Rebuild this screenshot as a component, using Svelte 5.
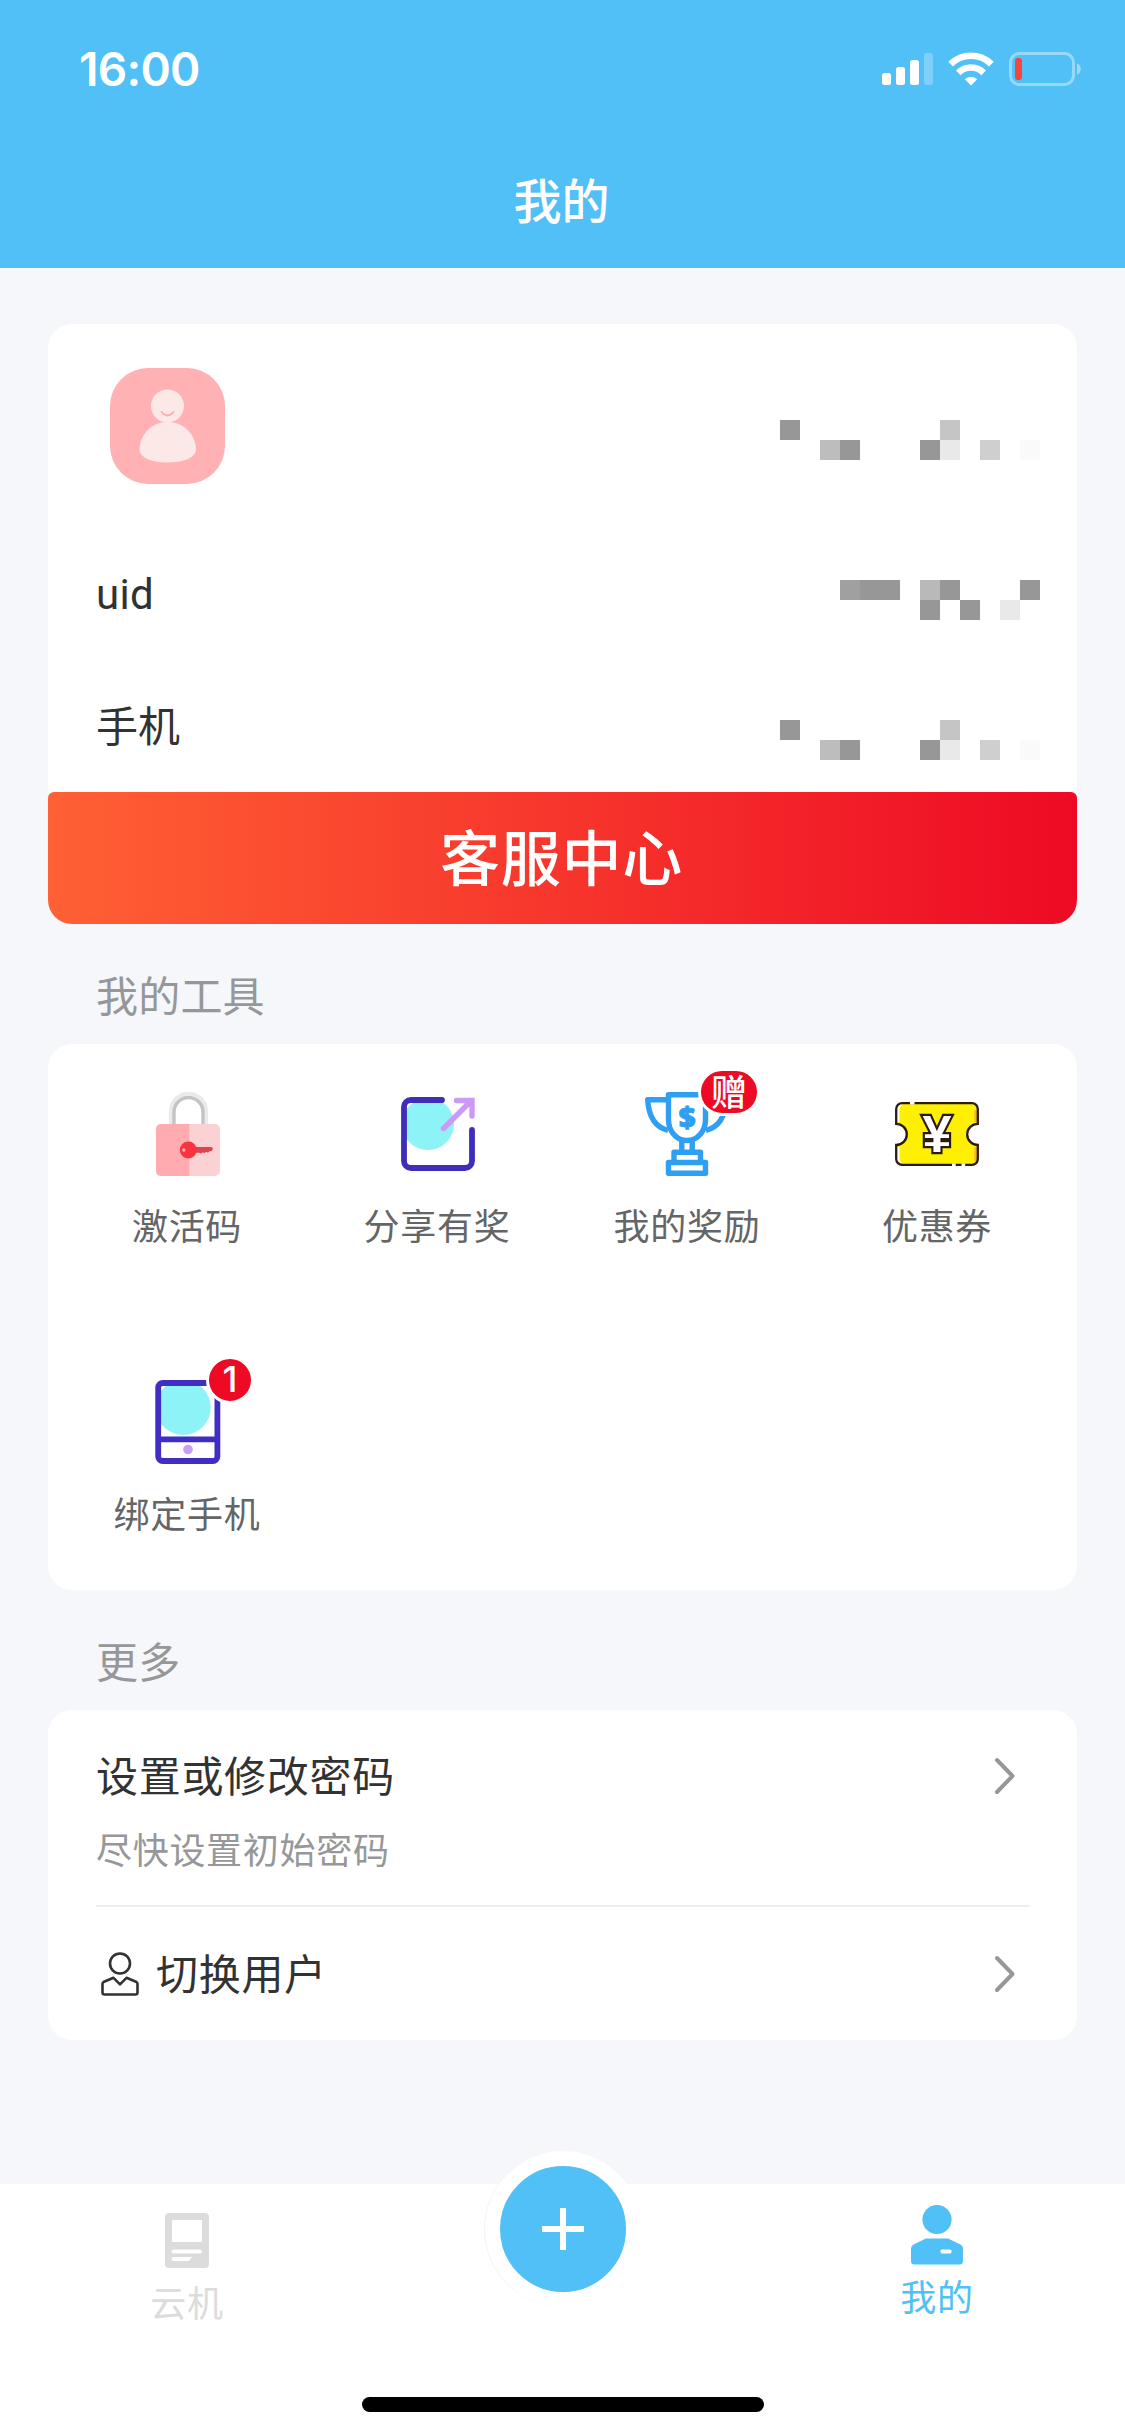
<script lang="ts">
  // each cell: [column, row, colour] on a 20px grid
  type Cell = [number, number, string];

  const nameMask: Cell[] = [
    [0, 0, '#979797'], [8, 0, '#c5c5c5'],
    [2, 1, '#bdbdbd'], [3, 1, '#979797'], [7, 1, '#979797'],
    [8, 1, '#e9e9e9'], [10, 1, '#cfcfcf'], [12, 1, '#fafafa']
  ];

  const uidMask: Cell[] = [
    [3, 0, '#a0a0a0'], [4, 0, '#979797'], [5, 0, '#979797'],
    [7, 0, '#b9b9b9'], [8, 0, '#979797'], [12, 0, '#979797'],
    [7, 1, '#979797'], [9, 1, '#979797'], [11, 1, '#e9e9e9']
  ];

  const tools = [
    { icon: 'lock', label: '激活码' },
    { icon: 'share', label: '分享有奖' },
    { icon: 'trophy', label: '我的奖励', badge: '赠' },
    { icon: 'coupon', label: '优惠券' },
    { icon: 'phone', label: '绑定手机', badge: '1' }
  ];
</script>

{#snippet mask(cells: Cell[], height: number, top: number)}
  <svg class="mask" width="260" {height} shape-rendering="crispEdges">
    {#each cells as [col, row, fill]}
      <rect x={col * 20} y={top + row * 20} width="20" height="20" {fill} />
    {/each}
  </svg>
{/snippet}

{#snippet arrow()}
  <svg class="arrow" width="24" height="40" viewBox="0 0 24 40">
    <path d="M4 4l15.5 16L4 36" fill="none" stroke="#969799" stroke-width="4" stroke-linecap="round" stroke-linejoin="round" />
  </svg>
{/snippet}

<div class="page">
  <header>
    <div class="status-bar">
      <span class="time">16:00</span>
      <svg width="202" height="36" viewBox="0 0 202 36">
        <g fill="#fff">
          <rect x="2" y="22" width="9" height="12" rx="2.5" />
          <rect x="16" y="16" width="9" height="18" rx="2.5" />
          <rect x="30" y="9" width="9" height="25" rx="2.5" />
          <rect x="44" y="2" width="9" height="32" rx="2.5" opacity=".25" />
          <path d="M91 34.500l-6.200-6.300a8.800 8.800 0 0 1 12.400 0z" />
        </g>
        <g fill="none" stroke="#fff" stroke-width="6.600">
          <path d="M78.300 21.800a18 18 0 0 1 25.400 0" />
          <path d="M70.600 13.200a29 29 0 0 1 40.800 0" />
        </g>
        <rect x="130.500" y="2.500" width="63" height="31" rx="9" fill="none" stroke="#fff" stroke-opacity=".4" stroke-width="3" />
        <rect x="135" y="7" width="7" height="22" rx="3" fill="#f8453c" />
        <path d="M197 12.500c5 1.500 5 9.500 0 11z" fill="#fff" opacity=".45" />
      </svg>
    </div>
    <h1>我的</h1>
  </header>

  <main>
    <section class="card profile">
      <div class="row user">
        <svg class="avatar" width="115" height="116" viewBox="0 0 115 116">
          <rect width="115" height="116" rx="38" fill="#ffb1b3" />
          <circle cx="57.500" cy="38" r="16.500" fill="#fde8e8" />
          <path d="M57.500 54c17 0 28 13 28.500 27 0 9-13 13.500-28.500 13.500S29.500 90 29.500 81C30 67 41 54 57.500 54z" fill="#fde8e8" />
          <path d="M51.500 44q6 7 12 0" fill="none" stroke="#ffa9ae" stroke-width="1.800" stroke-linecap="round" />
        </svg>
        {@render mask(nameMask, 204, 96)}
      </div>
      <div class="row">
        <span class="uid">uid</span>
        {@render mask(uidMask, 132, 52)}
      </div>
      <div class="row">
        <span class="mobile">手机</span>
        {@render mask(nameMask, 132, 60)}
      </div>
      <button class="service">客服中心</button>
    </section>

    <h2>我的工具</h2>
    <section class="card tools">
      {#each tools as tool}
        <div class="tool">
          <div class="icon">
            {#if tool.icon === 'lock'}
              <svg width="84" height="84" viewBox="0 0 84 84">
                <path d="M26 34V19a17.500 17.500 0 0 1 35 0v15" fill="none" stroke="#eaeaea" stroke-width="4" />
                <path d="M29 34V20a14.500 14.500 0 0 1 29 0v14" fill="none" stroke="#c3c5c5" stroke-width="3.400" />
                <rect x="11" y="32" width="64" height="52" rx="5" fill="#fbd1d3" />
                <path d="M44.300 32H16a5 5 0 0 0-5 5v42a5 5 0 0 0 5 5h28.300z" fill="#ffabb0" />
                <path d="M50 55h15.500q2.500 0 2.500 2l-1.500 2-2 .3-1.500 1.500-2-1-1.500 1.500-2-1-1.500 1.500-2-1H50z" fill="#de4450" />
                <circle cx="43.300" cy="58" r="8.500" fill="#f93440" />
                <circle cx="38.800" cy="58" r="1.700" fill="#ffb3b6" />
              </svg>
            {:else if tool.icon === 'share'}
              <svg width="84" height="84" viewBox="0 0 84 84">
                <circle cx="33" cy="32" r="26" fill="#8ef3f6" />
                <path d="M47 8H16a7 7 0 0 0-7 7v54a7 7 0 0 0 7 7h54a7 7 0 0 0 7-7V38" fill="none" stroke="#3f2dbb" stroke-width="5.800" stroke-linecap="round" />
                <path d="M48.500 36.500L76 9M61.500 8.500H77V24" fill="none" stroke="#cb9af6" stroke-width="5.400" stroke-linecap="round" />
              </svg>
            {:else if tool.icon === 'trophy'}
              <svg width="84" height="84" viewBox="0 0 84 84">
                <g fill="none" stroke="#2e9ff2" stroke-width="5.400" stroke-linejoin="round">
                  <path d="M23.500 2.700h37V28c0 10-7 20.500-18.500 20.500S23.500 38 23.500 28z" />
                  <path d="M23 7.700H2.700C3.500 23 9.500 35 23 38.500M61 7.700h20.300C80.500 23 74.500 35 61 38.500" />
                  <path d="M36.800 49v10.500M47.200 49v10.500" />
                  <path d="M29 70V60.200h26.500v9.800" />
                  <rect x="23.500" y="70.500" width="37" height="10.800" />
                </g>
                <text class="dollar" x="42" y="36" text-anchor="middle">$</text>
              </svg>
            {:else if tool.icon === 'coupon'}
              <svg width="84" height="84" viewBox="0 0 84 84">
                <path d="M7 11.200h70a5.800 5.800 0 0 1 5.800 5.800v14.800a10.600 10.600 0 0 0 0 21.200v14a5.800 5.800 0 0 1-5.800 5.800H7A5.800 5.800 0 0 1 1.200 67V53a10.600 10.600 0 0 0 0-21.200V17A5.800 5.800 0 0 1 7 11.200z" fill="#fff001" />
                <path d="M6 12.500Q3 14 3 17v13M3 55v12q0 3 3 4.500" fill="none" stroke="#fff" stroke-width="3" />
                <path d="M80.500 18v12M80.500 55v14" fill="none" stroke="#fbb03b" stroke-width="2.500" />
                <path d="M7 11.200h70a5.800 5.800 0 0 1 5.800 5.800v14.800a10.600 10.600 0 0 0 0 21.200v14a5.800 5.800 0 0 1-5.800 5.800H7A5.800 5.800 0 0 1 1.200 67V53a10.600 10.600 0 0 0 0-21.200V17A5.800 5.800 0 0 1 7 11.200z" fill="none" stroke="#2b1c12" stroke-width="2.300" />
                <path d="M15 11h4.500M57 73h3.700M66.500 73h3.700" stroke="#fff" stroke-width="3" />
                <text class="yuan" x="42" y="60" text-anchor="middle">¥</text>
              </svg>
            {:else}
              <svg width="84" height="84" viewBox="0 0 84 84">
                <circle cx="38.200" cy="27.500" r="27.500" fill="#8ef3f6" />
                <rect x="13.200" y="3" width="59.200" height="78" rx="4.500" fill="none" stroke="#3f2dc4" stroke-width="5.800" />
                <path d="M13 59.300h59" stroke="#3f2dc4" stroke-width="5.800" />
                <circle cx="43" cy="69.500" r="4.800" fill="#cb9ef2" />
              </svg>
            {/if}
            {#if tool.badge}
              <span class="badge" class:gift={tool.icon === 'trophy'}>{tool.badge}</span>
            {/if}
          </div>
          <span class="label">{tool.label}</span>
        </div>
      {/each}
    </section>

    <h2>更多</h2>
    <section class="card more">
      <div class="cell password">
        <div>
          <div class="title">设置或修改密码</div>
          <div class="note">尽快设置初始密码</div>
        </div>
        {@render arrow()}
      </div>
      <div class="cell switch">
        <svg class="user-icon" width="46" height="48" viewBox="0 0 46 48">
          <g fill="none" stroke="#323233" stroke-width="2.600" stroke-linejoin="round">
            <circle cx="24" cy="13.500" r="10" />
            <path d="M17.500 27.800L7.500 32q-1 .6-1 2v8.500q0 2 2 2h31q2 0 2-2V34q0-1.400-1-2l-10-4.200-6.500 6.500z" />
          </g>
        </svg>
        <div class="title">切换用户</div>
        {@render arrow()}
      </div>
    </section>
  </main>

  <nav>
    <div class="tab">
      <svg width="44" height="56" viewBox="0 0 44 56">
        <path fill="#dcdcdc" fill-rule="evenodd" d="M4 0h36q4 0 4 4v47q0 4-4 4H4q-4 0-4-4V4q0-4 4-4zM7 7v22h30V7zM8.500 36.500a2 2 0 0 0 0 4H35a2 2 0 0 0 0-4zM8.500 44a2 2 0 0 0 0 4H24l3-4z" />
      </svg>
      <span>云机</span>
    </div>
    <div class="add">
      <svg width="42" height="42" viewBox="0 0 42 42">
        <path d="M21 0v42M0 21h42" stroke="#fff" stroke-width="6" />
      </svg>
    </div>
    <div class="tab active">
      <svg width="52" height="60" viewBox="0 0 52 60">
        <g fill="#50c0f6">
          <circle cx="26" cy="14.500" r="14.600" />
          <path d="M15 33.500h22l12.500 6q2.500 1.300 2.500 4V56q0 3.500-3.500 3.500h-45Q0 59.500 0 56V43.500q0-2.700 2.500-4z" />
        </g>
        <rect x="29.500" y="44.500" width="11" height="4" rx="1.500" fill="#fff" />
      </svg>
      <span>我的</span>
    </div>
    <div class="home-bar"></div>
  </nav>
</div>

<style>
  :global(body) {
    background: #f5f7fb;
  }

  .page {
    display: flex;
    flex-direction: column;
    width: 1125px;
    height: 2436px;
    background: #f5f7fb;
    color: #323233;
    font-family: "Noto Sans CJK SC", sans-serif;
    font-size: 42px;
    letter-spacing: 0.7px;
  }

  header {
    height: 268px;
    background: #50c0f7;
    color: #fff;
  }

  .status-bar {
    display: flex;
    justify-content: space-between;
    align-items: center;
    height: 138px;
    padding: 0 43px 0 79px;
  }

  .time {
    font: 600 46px/1 Inter, sans-serif;
    letter-spacing: -0.7px;
  }

  h1 {
    margin: 0;
    padding-right: 2px;
    font-size: 48px;
    font-weight: 500;
    line-height: 120px;
    letter-spacing: 0;
    text-align: center;
  }

  main {
    flex: 1;
    padding: 56px 48px 0;
  }

  .card {
    background: #fff;
    border-radius: 24px;
  }

  .row {
    display: flex;
    justify-content: space-between;
    align-items: center;
    height: 132px;
    padding: 0 37px 0 48px;
    line-height: 60px;
  }

  .row.user {
    height: 204px;
    padding-left: 62px;
  }

  .uid {
    padding-top: 2px;
    font-family: Roboto, sans-serif;
    letter-spacing: 0.3px;
  }

  .mobile {
    padding-bottom: 4px;
    letter-spacing: 0;
  }

  .mask {
    display: block;
  }

  .service {
    display: block;
    width: 100%;
    height: 132px;
    padding: 0 2px 7px 0;
    border: 0;
    border-radius: 6px 6px 24px 24px;
    background: linear-gradient(to right, #ff6034, #ee0a24);
    color: #fff;
    font: inherit;
    font-size: 60px;
    font-weight: 500;
    line-height: 1;
    letter-spacing: 0.7px;
  }

  h2 {
    margin: 0;
    padding: 46px 48px 26px;
    color: #969799;
    font-size: 42px;
    font-weight: 400;
    line-height: 48px;
    letter-spacing: 0.2px;
  }

  .tools {
    display: grid;
    grid-template-columns: repeat(4, 250px);
    grid-auto-rows: 288px;
    height: 498px;
    padding: 48px 14px 0;
  }

  .tool {
    display: flex;
    flex-direction: column;
    align-items: center;
  }

  .icon {
    position: relative;
    height: 84px;
  }

  .icon svg {
    display: block;
  }

  .dollar {
    fill: #2e9ff2;
    stroke: #2e9ff2;
    stroke-width: 1px;
    font: 800 29px "Open Sans", sans-serif;
    letter-spacing: 0;
  }

  .yuan {
    fill: #fff;
    stroke: #2b1c12;
    stroke-width: 4.4px;
    paint-order: stroke;
    font: 700 52px "Liberation Sans", sans-serif;
    letter-spacing: 0;
  }

  .badge {
    position: absolute;
    top: 0;
    right: -1px;
    box-sizing: border-box;
    min-width: 48px;
    height: 48px;
    padding: 0 9px;
    border: 3px solid #fff;
    border-radius: 24px;
    background: #ee0a24;
    color: #fff;
    font-family: Inter, sans-serif;
    font-size: 36px;
    font-weight: 500;
    line-height: 40px;
    letter-spacing: 0;
    text-align: center;
    transform: translate(50%, -50%);
  }

  .badge.gift {
    right: 0;
    padding: 0 10px;
    font-family: "Noto Sans CJK SC", sans-serif;
    line-height: 38px;
  }

  .label {
    margin-top: 21px;
    color: #646566;
    font-size: 36px;
    line-height: 54px;
  }

  .cell {
    display: flex;
    margin-left: 48px;
    padding-right: 60px;
  }

  .cell .arrow {
    margin-left: auto;
  }

  .title {
    line-height: 72px;
  }

  .note {
    margin-top: 11px;
    color: #969799;
    font-size: 36px;
    line-height: 54px;
  }

  .password {
    box-sizing: border-box;
    height: 197px;
    margin-right: 48px;
    padding: 28px 12px 0 0;
    border-bottom: 2px solid #ebedf0;
  }

  .password .arrow {
    margin-top: 18px;
  }

  .switch {
    align-items: center;
    height: 133px;
  }

  .switch .title {
    margin: -4px 0 0 14px;
  }

  nav {
    position: relative;
    display: grid;
    grid-template-columns: 375px 375px 375px;
    height: 252px;
    background: #fff;
  }

  .tab {
    display: flex;
    flex-direction: column;
    align-items: center;
    padding: 29px 1px 0 0;
    color: #dcdcdc;
    font-size: 36px;
    line-height: 54px;
  }

  .tab span {
    margin-top: 5px;
  }

  .tab.active {
    padding-top: 21px;
    color: #50c0f6;
  }

  .tab.active span {
    margin-top: 3px;
  }

  /* the round button rises above the bar */
  .add {
    display: flex;
    align-items: center;
    justify-content: center;
    justify-self: center;
    width: 126px;
    height: 126px;
    margin-top: -33px;
    border: 15px solid #fff;
    border-radius: 50%;
    background: #50c0f6;
    box-shadow: -1px 0 0 #f3f3f3;
  }

  .home-bar {
    position: absolute;
    bottom: 24px;
    left: 362px;
    width: 402px;
    height: 15px;
    border-radius: 8px;
    background: #000;
  }
</style>
